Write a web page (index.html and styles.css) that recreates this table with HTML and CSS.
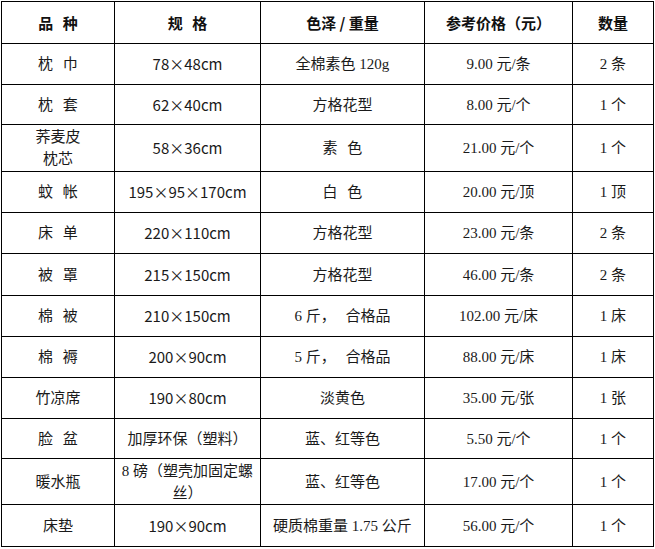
FILE: index.html
```html
<!DOCTYPE html>
<html lang="zh">
<head>
<meta charset="utf-8">
<link rel="stylesheet" href="styles.css">
</head>
<body>
<table class="goods">
<colgroup>
<col class="c1"><col class="c2"><col class="c3"><col class="c4"><col class="c5">
</colgroup>
<tr class="head r42"><th><span class="sp">品 种</span></th><th><span class="sp">规 格</span></th><th>色泽 / 重量</th><th>参考价格（元）</th><th>数量</th></tr>
<tr class="r41"><td><span class="sp">枕 巾</span></td><td class="dim">78×48cm</td><td>全棉素色 120g</td><td>9.00 元/条</td><td>2 条</td></tr>
<tr class="r40"><td><span class="sp">枕 套</span></td><td class="dim">62×40cm</td><td>方格花型</td><td>8.00 元/个</td><td>1 个</td></tr>
<tr class="r47"><td class="multi">荞麦皮<br>枕芯</td><td class="dim">58×36cm</td><td><span class="sp">素 色</span></td><td>21.00 元/个</td><td>1 个</td></tr>
<tr class="r41"><td><span class="sp">蚊 帐</span></td><td class="dim">195×95×170cm</td><td><span class="sp">白 色</span></td><td>20.00 元/顶</td><td>1 顶</td></tr>
<tr class="r41"><td><span class="sp">床 单</span></td><td class="dim">220×110cm</td><td>方格花型</td><td>23.00 元/条</td><td>2 条</td></tr>
<tr class="r42"><td><span class="sp">被 罩</span></td><td class="dim">215×150cm</td><td>方格花型</td><td>46.00 元/条</td><td>2 条</td></tr>
<tr class="r41"><td><span class="sp">棉 被</span></td><td class="dim">210×150cm</td><td>6 斤，<span class="sp"> </span>合格品</td><td>102.00 元/床</td><td>1 床</td></tr>
<tr class="r41"><td><span class="sp">棉 褥</span></td><td class="dim">200×90cm</td><td>5 斤，<span class="sp"> </span>合格品</td><td>88.00 元/床</td><td>1 床</td></tr>
<tr class="r41"><td>竹凉席</td><td class="dim">190×80cm</td><td>淡黄色</td><td>35.00 元/张</td><td>1 张</td></tr>
<tr class="r40"><td><span class="sp">脸 盆</span></td><td>加厚环保（塑料）</td><td>蓝、红等色</td><td>5.50 元/个</td><td>1 个</td></tr>
<tr class="r46"><td>暖水瓶</td><td class="multi">8 磅（塑壳加固定螺<br>丝）</td><td>蓝、红等色</td><td>17.00 元/个</td><td>1 个</td></tr>
<tr class="r43"><td>床垫</td><td class="dim">190×90cm</td><td>硬质棉重量 1.75 公斤</td><td>56.00 元/个</td><td>1 个</td></tr>
</table>
</body>
</html>
```

FILE: styles.css
```css
html, body {
  background: #fff;
}
body {
  margin: 1px 0 0 1px;
  font-family: "Liberation Serif", "Noto Sans CJK SC", serif;
  font-size: 15px;
  color: #1a1a1a;
}
.goods {
  border-collapse: collapse;
  table-layout: fixed;
  width: 653px;
  border: 1px solid #000;
}
.c1 { width: 113px; }
.c2 { width: 146px; }
.c3 { width: 164px; }
.c4 { width: 148px; }
.c5 { width: 81px; }
.goods th,
.goods td {
  border: 1px solid #000;
  text-align: center;
  vertical-align: middle;
  padding: 0 4px;
  line-height: 18px;
  white-space: nowrap;
}
.goods th {
  font-family: "Noto Sans CJK SC", sans-serif;
  font-weight: 700;
  color: #111;
}
.goods td.dim {
  font-family: "Noto Sans CJK SC", sans-serif;
}
.goods td.multi {
  line-height: 22px;
}
.sp {
  word-spacing: 6px;
}
.r40 { height: 40px; }
.r41 { height: 41px; }
.r42 { height: 42px; }
.r43 { height: 42px; }
.r46 { height: 46px; }
.r47 { height: 47px; }
```
